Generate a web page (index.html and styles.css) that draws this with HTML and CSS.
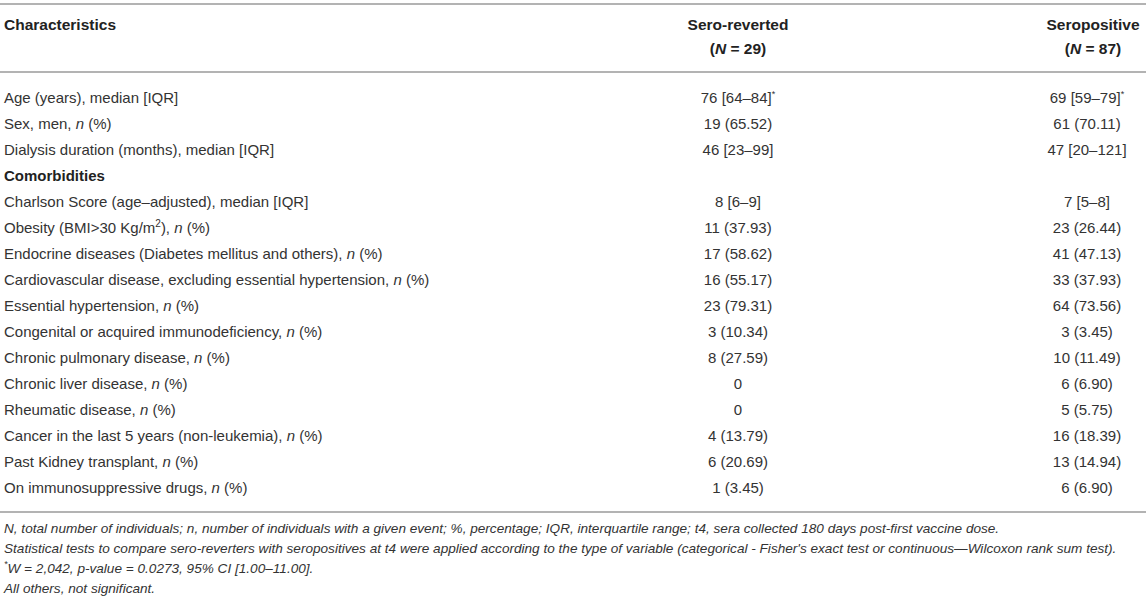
FILE: index.html
```html
<!DOCTYPE html>
<html lang="en">
<head>
  <meta charset="UTF-8">
  <title>Table 1 - Characteristics</title>
  <link rel="stylesheet" href="styles.css">
</head>
<body>
  <div class="wrap">
    <table class="data">
      <colgroup>
        <col class="c-label">
        <col class="c-rev">
        <col class="c-pos">
      </colgroup>
      <thead>
        <tr>
          <th class="left">Characteristics</th>
          <th>Sero-reverted<br>(<i>N</i> = 29)</th>
          <th>Seropositive<br>(<i>N</i> = 87)</th>
        </tr>
      </thead>
      <tbody>
        <tr><td>Age (years), median [IQR]</td><td>76 [64–84]<sup>*</sup></td><td>69 [59–79]<sup>*</sup></td></tr>
        <tr><td>Sex, men, <i>n</i> (%)</td><td>19 (65.52)</td><td>61 (70.11)</td></tr>
        <tr><td>Dialysis duration (months), median [IQR]</td><td>46 [23–99]</td><td>47 [20–121]</td></tr>
        <tr><td class="group">Comorbidities</td><td></td><td></td></tr>
        <tr><td>Charlson Score (age–adjusted), median [IQR]</td><td>8 [6–9]</td><td>7 [5–8]</td></tr>
        <tr><td>Obesity (BMI&gt;30 Kg/m<sup class="exp">2</sup>), <i>n</i> (%)</td><td>11 (37.93)</td><td>23 (26.44)</td></tr>
        <tr><td>Endocrine diseases (Diabetes mellitus and others), <i>n</i> (%)</td><td>17 (58.62)</td><td>41 (47.13)</td></tr>
        <tr><td>Cardiovascular disease, excluding essential hypertension, <i>n</i> (%)</td><td>16 (55.17)</td><td>33 (37.93)</td></tr>
        <tr><td>Essential hypertension, <i>n</i> (%)</td><td>23 (79.31)</td><td>64 (73.56)</td></tr>
        <tr><td>Congenital or acquired immunodeficiency, <i>n</i> (%)</td><td>3 (10.34)</td><td>3 (3.45)</td></tr>
        <tr><td>Chronic pulmonary disease, <i>n</i> (%)</td><td>8 (27.59)</td><td>10 (11.49)</td></tr>
        <tr><td>Chronic liver disease, <i>n</i> (%)</td><td>0</td><td>6 (6.90)</td></tr>
        <tr><td>Rheumatic disease, <i>n</i> (%)</td><td>0</td><td>5 (5.75)</td></tr>
        <tr><td>Cancer in the last 5 years (non-leukemia), <i>n</i> (%)</td><td>4 (13.79)</td><td>16 (18.39)</td></tr>
        <tr><td>Past Kidney transplant, <i>n</i> (%)</td><td>6 (20.69)</td><td>13 (14.94)</td></tr>
        <tr><td>On immunosuppressive drugs, <i>n</i> (%)</td><td>1 (3.45)</td><td>6 (6.90)</td></tr>
      </tbody>
    </table>

    <div class="notes">
      <p>N, total number of individuals; n, number of individuals with a given event; %, percentage; IQR, interquartile range; t4, sera collected 180 days post-first vaccine dose.</p>
      <p>Statistical tests to compare sero-reverters with seropositives at t4 were applied according to the type of variable (categorical - Fisher's exact test or continuous—Wilcoxon rank sum test).</p>
      <p><sup>*</sup>W = 2,042, p-value = 0.0273, 95% CI [1.00–11.00].</p>
      <p>All others, not significant.</p>
    </div>
  </div>
</body>
</html>
```

FILE: styles.css
```css
* {
  box-sizing: border-box;
  margin: 0;
  padding: 0;
}

body {
  font-family: 'Liberation Sans', Arial, sans-serif;
  background: #fff;
  color: #333;
}

.wrap {
  padding-top: 3px;
}

.data {
  width: 100%;
  border-collapse: collapse;
  font-size: 15px;
}

.c-label {
  width: 436px;
}

.c-pos {
  width: 106px;
}

.data thead th {
  font-size: 15.5px;
  font-weight: bold;
  color: #222;
  line-height: 24px;
  padding: 8px 4px 10px;
  text-align: center;
  vertical-align: top;
  border-top: 2px solid #b3b3b3;
  border-bottom: 2px solid #b3b3b3;
  white-space: nowrap;
}

.data thead th.left {
  text-align: left;
}

.data td {
  line-height: 18px;
  padding: 4px 4px;
  text-align: center;
  white-space: nowrap;
}

.data td:first-child {
  text-align: left;
}

.data td:last-child {
  padding-right: 16px;
}

.data tbody tr:first-child td {
  padding-top: 16px;
}

.data tbody tr:last-child td {
  padding-bottom: 14px;
  border-bottom: 2px solid #b3b3b3;
}

.data td.group {
  font-weight: bold;
  color: #222;
}

sup {
  font-size: 9px;
  line-height: 0;
  vertical-align: 6px;
}

sup.exp {
  font-size: 10px;
}

.notes {
  padding: 6px 4px 0;
  font-size: 13.6px;
  font-style: italic;
  line-height: 20px;
  white-space: nowrap;
}
```
